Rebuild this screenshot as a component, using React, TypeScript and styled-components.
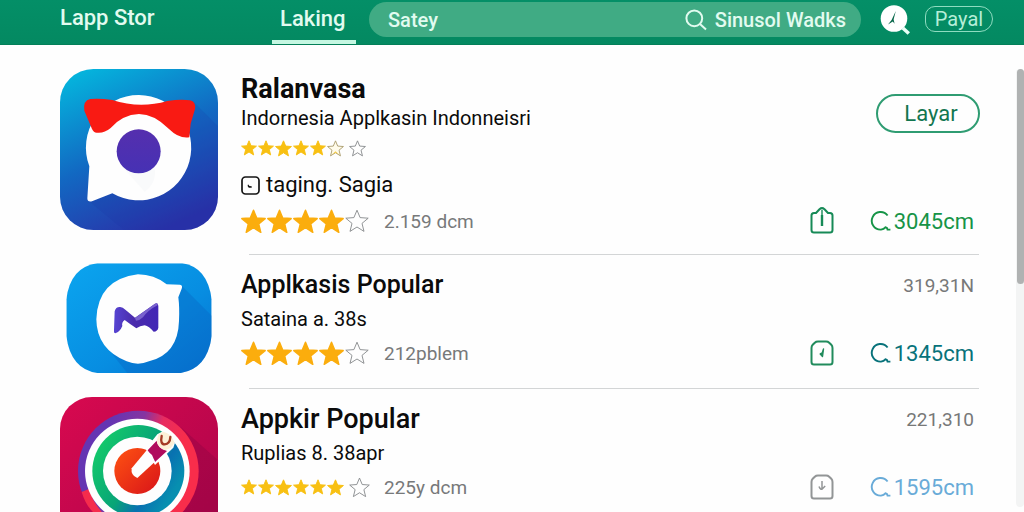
import React from "react";
import styled, { createGlobalStyle } from "styled-components";

const GlobalStyle = createGlobalStyle`
  *, *::before, *::after { box-sizing: border-box; }
  body {
    margin: 0;
    background: #fefefe;
    color: #0b0b0b;
    font-family: Roboto, "Liberation Sans", sans-serif;
  }
  button, input { font: inherit; color: inherit; }
`;

const Page = styled.div`
  display: flex;
  flex-direction: column;
  height: 100vh;
  overflow: hidden;
`;

const Header = styled.header`
  display: flex;
  flex: none;
  align-items: flex-start;
  height: 45px;
  padding: 0 31px 0 60px;
  background: linear-gradient(#048f67, #048961);
  border-bottom: 1px solid #047f59;
  color: #e2fbf0;
  font-size: 20px;
`;

const Brand = styled.a`
  width: 212px;
  color: inherit;
  font-size: 22px;
  font-weight: 500;
  line-height: 36px;
  text-decoration: none;
`;

const Tab = styled.a`
  width: 84px;
  height: 44px;
  margin-right: 13px;
  padding: 0 8px;
  border-bottom: 4px solid #c5f7e2;
  color: inherit;
  font-size: 22px;
  font-weight: 500;
  line-height: 38px;
  text-decoration: none;
`;

const SearchBar = styled.form`
  display: flex;
  flex: 1;
  align-items: center;
  min-width: 0;
  height: 35px;
  margin: 2px 19px 0 0;
  padding: 0 15px 0 19px;
  border-radius: 18px;
  background: #40ab84;
`;

const SearchInput = styled.input`
  flex: 1;
  min-width: 0;
  padding: 0;
  border: 0;
  outline: 0;
  background: transparent;
  font-weight: 500;
`;

const SearchSubmit = styled.button`
  display: flex;
  align-items: center;
  gap: 8px;
  padding: 0;
  border: 0;
  background: transparent;
  font-weight: 500;
  white-space: nowrap;
`;

const ExploreButton = styled.button`
  display: flex;
  width: 30px;
  height: 32px;
  margin: 4px 15px 0 0;
  padding: 0;
  border: 0;
  background: transparent;
`;

const AccountButton = styled.button`
  width: 68px;
  height: 26px;
  margin-top: 6px;
  padding: 0;
  border: 1px solid #8fdcc0;
  border-radius: 10px 13px 13px 10px;
  background: transparent;
  color: #b5eed8;
  font-size: 20px;
  line-height: 24px;
`;

const Body = styled.div`
  display: flex;
  flex: 1;
  min-height: 0;
`;

const AppList = styled.main`
  flex: 1;
  min-width: 0;
  overflow: hidden;
`;

const Rail = styled.div`
  width: 8px;
  margin: 24px 0 5px;
  border-radius: 4px;
  background: #f3f4f4;
`;

const Thumb = styled.div`
  width: 7px;
  height: 49%;
  margin-left: 1px;
  border-radius: 4px;
  background: #b0b2b2;
`;

const Row = styled.article<{ $featured?: boolean }>`
  display: flex;
  gap: 23px;
  padding: ${(p) => (p.$featured ? "24px 36px 18px 60px" : "8px 36px 0 60px")};
`;

const IconCell = styled.div`
  display: flex;
  flex: none;
  justify-content: center;
  align-items: flex-start;
  width: 158px;
`;

const Details = styled.div<{ $featured?: boolean }>`
  display: flex;
  flex: 1;
  flex-direction: column;
  min-width: 0;
  padding: ${(p) => (p.$featured ? "6px 0 0" : "8px 0 20px")};
`;

const Split = styled.div`
  display: flex;
  justify-content: space-between;
  align-items: flex-start;
`;

const Title = styled.h2<{ $compact?: boolean; $bold?: boolean }>`
  margin: 0;
  font-size: ${(p) => (p.$compact ? 25 : 27)}px;
  font-weight: ${(p) => (p.$bold ? 700 : 500)};
  line-height: 28px;
`;

const Subtitle = styled.p<{ $spaced?: boolean }>`
  margin: ${(p) => (p.$spaced ? "3px 0 0" : "0")};
  font-size: 20px;
  line-height: 30px;
`;

const Tagline = styled.p`
  display: flex;
  align-items: center;
  gap: 6px;
  margin: 7px 0 2px;
  font-size: 22px;
  line-height: 30px;
`;

const Foot = styled.div`
  display: flex;
  align-items: center;
  height: 30px;
  margin-top: 4px;
  padding-right: 6px;
`;

const StarRow = styled.div<{ $wide?: boolean }>`
  display: flex;
  align-items: center;
  gap: 1px;
  height: 30px;
  width: ${(p) => (p.$wide ? "143px" : "auto")};

  svg:nth-child(7) { margin-left: 4px; }
`;

const Votes = styled.span`
  flex: 1;
  color: #77797a;
  font-size: 19px;
`;

const Count = styled.span`
  padding-right: 6px;
  color: #777878;
  font-size: 19px;
  line-height: 30px;
`;

const OpenButton = styled.button`
  width: 104px;
  height: 39px;
  margin-top: 19px;
  padding: 0 0 0 6px;
  border: 2px solid #2f9c72;
  border-radius: 20px;
  background: transparent;
  color: #127650;
  font-size: 22px;
`;

const ShareButton = styled.button<{ $tone: string }>`
  display: flex;
  margin-right: 36px;
  padding: 0;
  border: 0;
  background: transparent;
  color: ${(p) => p.$tone};
`;

const Size = styled.span<{ $tone: string }>`
  display: flex;
  align-items: center;
  gap: 3px;
  color: ${(p) => p.$tone};
  font-size: 22px;
`;

const Divider = styled.hr`
  height: 1px;
  margin: 0 37px 0 249px;
  border: 0;
  background: #d3d5d6;
`;

const STAR = "M12 1.2 15.1 8.6 23.2 9.2 17 14.4 19 22.4 12 18 5 22.4 7 14.4 .8 9.2 8.9 8.6Z";

type StarKind = "full" | "pale" | "empty";

function Star({ size, kind, color }: { size: number; kind: StarKind; color: string }) {
  const thin = 24 / size;
  return (
    <svg width={size} height={size} viewBox="0 0 24 24" aria-hidden="true">
      <path
        d={STAR}
        fill={kind === "empty" ? "none" : kind === "pale" ? "#fffbea" : color}
        stroke={kind === "full" ? color : kind === "pale" ? "#a89a6a" : "#85888a"}
        strokeWidth={kind === "full" ? 1.4 : thin * 0.9}
        strokeLinejoin="round"
      />
      {kind === "pale" && <path d="M7 20.500 12 16l5 4.500-5-2.500Z" fill="#f3cc45" />}
    </svg>
  );
}

function LargeStars() {
  return (
    <StarRow $wide role="img" aria-label="4 / 5">
      {[0, 1, 2, 3].map((i) => (
        <Star key={i} size={25} kind="full" color="#fbad0d" />
      ))}
      <Star size={24} kind="empty" color="" />
    </StarRow>
  );
}

function SmallStars({ kinds, wide, lastSize }: { kinds: StarKind[]; wide?: boolean; lastSize: number }) {
  return (
    <StarRow $wide={wide} role="img" aria-label="rating">
      {kinds.map((kind, i) => (
        <Star key={i} size={i === kinds.length - 1 ? lastSize : i % 3 === 2 ? 17 : 16} kind={kind} color="#f8c012" />
      ))}
    </StarRow>
  );
}

function SearchIcon() {
  return (
    <svg width="22" height="22" viewBox="0 0 22 22" fill="none" stroke="currentColor" strokeWidth="2" aria-hidden="true">
      <circle cx="9.3" cy="9.3" r="7.9" />
      <path d="m15 15 6 5.6" />
    </svg>
  );
}

function ExploreIcon() {
  return (
    <svg width="30" height="32" viewBox="0 0 30 32" aria-hidden="true">
      <circle cx="14" cy="14.5" r="13.3" fill="#fff" />
      <path d="m22.8 24 6 5.5" stroke="#e9fff6" strokeWidth="3.6" />
      <path d="M15.8 7 13.6 15.500l1 4.200-1.800-2.200L8 20.600l3.600-4.600Z" fill="#07664a" />
    </svg>
  );
}

function ShareIcon({ kind }: { kind: "share" | "saved" | "download" }) {
  return (
    <svg width="24" height="28" viewBox="0 0 24 28" fill="none" stroke="currentColor" strokeWidth="2" strokeLinejoin="round" aria-hidden="true">
      {kind === "share" && (
        <>
          <path d="M6 6H4Q1.500 6 1.500 8.500V23Q1.500 25.500 4 25.500h16q2.500 0 2.500-2.500V8.500Q22.500 6 20 6h-2L14.500 2.200Q12 0 9.500 2.200Z" />
          <path d="M12 3v6" strokeWidth="1.4" />
          <path d="M12 8v11" strokeWidth="2.4" />
        </>
      )}
      {kind !== "share" && (
        <path d="M8 2.500h8q2 0 3.200 1.200l2.100 2.100q1.200 1.200 1.200 3.200v14q0 2.500-2.500 2.500H4q-2.500 0-2.500-2.500V9q0-2 1.200-3.200l2.100-2.100Q6 2.500 8 2.500Z" />
      )}
      {kind === "saved" && <path d="M13.500 10 12.500 17.500 10.200 15l2-1Z" fill="currentColor" strokeWidth="1.400" />}
      {kind === "download" && <path d="M12 8v8M9 13.500q1.500 3.500 3.200 2.500l3-3" strokeWidth="1.500" />}
    </svg>
  );
}

function SizeIcon() {
  return (
    <svg width="21" height="22" viewBox="0 0 21 22" fill="none" stroke="currentColor" strokeWidth="1.9" aria-hidden="true">
      <path d="M17.600 5.500A8.800 8.800 0 1 0 11 19.600q2.800-.4 4.400-2.300 2 .3 2.200 2.300h2.800" />
    </svg>
  );
}

function TagIcon() {
  return (
    <svg width="19" height="19" viewBox="0 0 19 19" aria-hidden="true">
      <rect x="1" y="1" width="17" height="17" rx="3.500" fill="none" stroke="#151515" strokeWidth="1.700" />
      <path d="M7 8.200 8.500 10l2.200.3v1.500H7.800L6.600 10Z" fill="#151515" />
    </svg>
  );
}

function ChatRibbonIcon() {
  return (
    <svg width="158" height="161" viewBox="28 25 474 483" aria-hidden="true">
      <defs>
        <linearGradient id="sea" x1=".2" y1="0" x2=".65" y2="1">
          <stop offset="0" stopColor="#05b2dc" />
          <stop offset=".5" stopColor="#1268c2" />
          <stop offset="1" stopColor="#2a31a8" />
        </linearGradient>
        <linearGradient id="iris" x1="0" y1="0" x2="0" y2="1">
          <stop offset="0" stopColor="#552fae" />
          <stop offset="1" stopColor="#4631b4" />
        </linearGradient>
        <clipPath id="seaClip"><rect x="28" y="25" width="474" height="483" rx="100" /></clipPath>
      </defs>
      <rect x="28" y="25" width="474" height="483" rx="100" fill="url(#sea)" />
      <path d="M425 120 502 197V508H220L115 422Z" fill="#1d2fa0" opacity=".15" clipPath="url(#seaClip)" />
      <path d="M265 103A158 158 0 1 1 185 398L124 422Q110 425 110 413L116 317A158 158 0 0 1 265 103Z" fill="#fefefe" />
      <path d="M119 115Q145 112 185 118 267 145 350 121 390 115 418 119 436 122 433 145L420 189 416 230Q385 235 355 205 310 160 265 160 215 162 180 202 160 219 138 216 129 216 124 205L101 150Q96 120 119 115Z" fill="#f91a13" />
      <path d="M218 321 282 393Q320 365 311 318Z" fill="#f4f5f8" opacity=".5" />
      <circle cx="264" cy="272" r="66" fill="url(#iris)" />
    </svg>
  );
}

function MessengerIcon() {
  return (
    <svg width="146" height="110" viewBox="51 36 438 330" preserveAspectRatio="none" aria-hidden="true">
      <defs>
        <linearGradient id="sky" x1="0" y1="0" x2="1" y2="1">
          <stop offset="0" stopColor="#0ba5ef" />
          <stop offset=".6" stopColor="#078de1" />
          <stop offset="1" stopColor="#0670cf" />
        </linearGradient>
        <linearGradient id="zig" x1="0" y1="0" x2="1" y2="0">
          <stop offset="0" stopColor="#5644d2" />
          <stop offset=".45" stopColor="#4a2bab" />
          <stop offset="1" stopColor="#4126b6" />
        </linearGradient>
        <clipPath id="skyClip"><path d="M145 37H400Q475 48 488 145V255Q475 353 395 366H145Q65 355 52 255V145Q64 48 145 37Z" /></clipPath>
      </defs>
      <g clipPath="url(#skyClip)">
        <rect x="51" y="36" width="438" height="330" fill="url(#sky)" />
        <path d="M399 105 489 195V366H235L190 310Z" fill="#0768c5" opacity=".42" />
      </g>
      <path d="M267 70Q315 70 353 100L393 101Q402 103 398 113L388 139Q392 170 390 210 387 310 300 331 267 345 233 331 143 295 142 205 146 85 267 70Z" fill="#fefefe" />
      <path d="M199 247Q194 247 195 237L197 181Q200 168 212 168 220 167 230 177L258 200 318 158Q327 153 328 166V230Q326 241 314 242 300 226 287 223 273 224 262 232 244 220 227 207 217 214 220 225Q213 242 199 247Z" fill="url(#zig)" />
      <path d="m258 201 60-43q8-4 9 4-30 15-45 37-10 10-21 10Z" fill="#7961ce" />
    </svg>
  );
}

function TargetIcon() {
  return (
    <svg width="158" height="161" viewBox="28 20 474 483" aria-hidden="true">
      <defs>
        <linearGradient id="rose" x1="0" y1="0" x2="1" y2="1">
          <stop offset="0" stopColor="#d8094f" />
          <stop offset="1" stopColor="#a9044a" />
        </linearGradient>
        <linearGradient id="rim" x1=".2" y1=".3" x2=".8" y2=".5">
          <stop offset="0" stopColor="#6535b2" />
          <stop offset=".4" stopColor="#8634a0" />
          <stop offset=".65" stopColor="#e82b60" />
          <stop offset="1" stopColor="#f82d4b" />
        </linearGradient>
        <linearGradient id="ring" x1=".1" y1=".2" x2=".9" y2=".7">
          <stop offset="0" stopColor="#13c76b" />
          <stop offset=".5" stopColor="#08a477" />
          <stop offset=".75" stopColor="#0871b1" />
          <stop offset="1" stopColor="#078fb0" />
        </linearGradient>
        <linearGradient id="bull" x1="0" y1="0" x2="1" y2="1">
          <stop offset="0" stopColor="#ff5312" />
          <stop offset="1" stopColor="#d81319" />
        </linearGradient>
        <clipPath id="roseClip"><rect x="28" y="20" width="474" height="483" rx="96" /></clipPath>
      </defs>
      <g clipPath="url(#roseClip)">
        <rect x="28" y="20" width="474" height="483" fill="url(#rose)" />
        <path d="M390 110 502 210V503H250Z" fill="#920542" opacity=".42" />
      </g>
      <circle cx="263" cy="242" r="181" fill="url(#rim)" />
      <path d="M93 305 116 295Q125 335 158 370L128 366Q105 345 93 305Z" fill="#f52c4c" />
      <circle cx="260" cy="242" r="157" fill="#fefefe" />
      <circle cx="263" cy="242" r="138" fill="url(#ring)" />
      <circle cx="260" cy="242" r="103" fill="#fefefe" />
      <circle cx="260" cy="242" r="69" fill="url(#bull)" />
      <path d="m285 176 35-44 18-10 35 35-5 15-55 52Z" fill="#fefefe" />
      <path d="m318 151-27 29 22 35 36-33q-29-8-31-31Z" fill="#b00c5d" />
      <path d="m288 180-45 54q-3 22 17 29l53-49-9-20Z" fill="#fefefe" />
      <path d="m324 132 14-8q26 6 33 33l-10 15-18 8q-22-9-25-29Z" fill="#fdf0d7" />
      <path d="M333 137q-5 25 9 25 16-1 17-22" fill="none" stroke="#a53a25" strokeWidth="7" strokeLinecap="round" />
    </svg>
  );
}

type Listing = {
  title: string;
  compact: boolean;
  subtitle: string;
  count: string;
  votes: string;
  size: string;
  sizeTone: string;
  shareTone: string;
  share: "saved" | "download";
  icon: React.ReactNode;
  stars: React.ReactNode;
};

const LISTINGS: Listing[] = [
  {
    title: "Applkasis Popular",
    compact: true,
    subtitle: "Sataina a. 38s",
    count: "319,31N",
    votes: "212pblem",
    size: "1345cm",
    sizeTone: "#08727a",
    shareTone: "#218b5c",
    share: "saved",
    icon: <MessengerIcon />,
    stars: <LargeStars />,
  },
  {
    title: "Appkir Popular",
    compact: false,
    subtitle: "Ruplias 8. 38apr",
    count: "221,310",
    votes: "225y dcm",
    size: "1595cm",
    sizeTone: "#69abd8",
    shareTone: "#929596",
    share: "download",
    icon: <TargetIcon />,
    stars: <SmallStars wide lastSize={21} kinds={["full", "full", "full", "full", "full", "full", "empty"]} />,
  },
];

export default function App() {
  return (
    <Page>
      <GlobalStyle />
      <Header>
        <Brand href="#">Lapp Stor</Brand>
        <Tab href="#" aria-current="page">Laking</Tab>
        <SearchBar role="search" onSubmit={(e) => e.preventDefault()}>
          <SearchInput aria-label="Satey" defaultValue="Satey" />
          <SearchSubmit type="submit">
            <SearchIcon />
            Sinusol Wadks
          </SearchSubmit>
        </SearchBar>
        <ExploreButton type="button" aria-label="Explore"><ExploreIcon /></ExploreButton>
        <AccountButton type="button">Payal</AccountButton>
      </Header>
      <Body>
        <AppList>
          <Row $featured>
            <IconCell><ChatRibbonIcon /></IconCell>
            <Details $featured>
              <Split>
                <div>
                  <Title $bold>Ralanvasa</Title>
                  <Subtitle>Indornesia Applkasin Indonneisri</Subtitle>
                  <SmallStars lastSize={17} kinds={["full", "full", "full", "full", "full", "pale", "empty"]} />
                </div>
                <OpenButton type="button">Layar</OpenButton>
              </Split>
              <Tagline><TagIcon />taging. Sagia</Tagline>
              <Foot>
                <LargeStars />
                <Votes>2.159 dcm</Votes>
                <ShareButton type="button" $tone="#178a57" aria-label="Share"><ShareIcon kind="share" /></ShareButton>
                <Size $tone="#169447"><SizeIcon />3045cm</Size>
              </Foot>
            </Details>
          </Row>
          {LISTINGS.map((item) => (
            <React.Fragment key={item.title}>
              <Divider />
              <Row>
                <IconCell>{item.icon}</IconCell>
                <Details>
                  <Split>
                    <Title $compact={item.compact}>{item.title}</Title>
                    <Count>{item.count}</Count>
                  </Split>
                  <Subtitle $spaced>{item.subtitle}</Subtitle>
                  <Foot>
                    {item.stars}
                    <Votes>{item.votes}</Votes>
                    <ShareButton type="button" $tone={item.shareTone} aria-label="Download"><ShareIcon kind={item.share} /></ShareButton>
                    <Size $tone={item.sizeTone}><SizeIcon />{item.size}</Size>
                  </Foot>
                </Details>
              </Row>
            </React.Fragment>
          ))}
        </AppList>
        <Rail><Thumb /></Rail>
      </Body>
    </Page>
  );
}
